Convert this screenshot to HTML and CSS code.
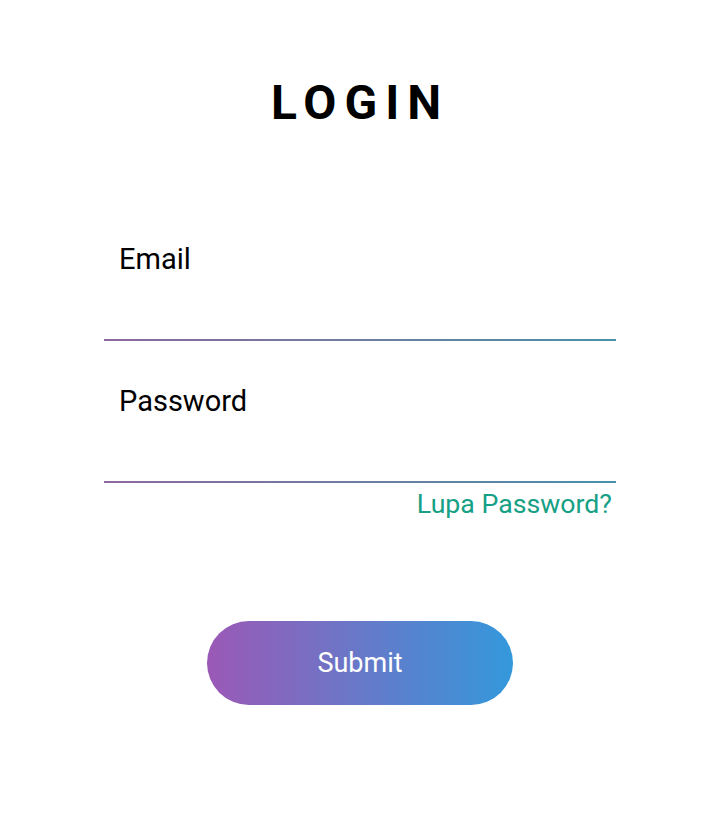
FILE: index.html
```html
<!DOCTYPE html>
<html lang="id">
<head>
<meta charset="utf-8">
<title>Login</title>
<link rel="stylesheet" href="styles.css">
</head>
<body>
<main class="page">
  <h1 class="title">LOGIN</h1>
  <form class="form">
    <div class="field">
      <label class="label" for="email">Email</label>
      <input class="input" id="email" type="email">
      <div class="line"></div>
    </div>
    <div class="field field-second">
      <label class="label" for="password">Password</label>
      <input class="input" id="password" type="password">
      <div class="line"></div>
    </div>
    <a class="forgot" href="#">Lupa Password?</a>
    <div class="actions">
      <button class="submit" type="button">Submit</button>
    </div>
  </form>
</main>
</body>
</html>
```
FILE: styles.css
```css
html, body {
  margin: 0;
  padding: 0;
  background: #ffffff;
}
body {
  font-family: Roboto, "Liberation Sans", Arial, sans-serif;
  color: #000;
}
.page {
  width: 720px;
  height: 816px;
  box-sizing: border-box;
  padding-top: 75px;
}
.title {
  margin: 0;
  font-size: 48px;
  line-height: 56px;
  font-weight: 700;
  letter-spacing: 8px;
  text-align: center;
  color: #000;
}
.form {
  margin: 112px 104px 0 104px;
  display: flex;
  flex-direction: column;
}
.field {
  display: flex;
  flex-direction: column;
}
.field-second {
  margin-top: 44px;
}
.label {
  font-size: 29px;
  line-height: 32px;
  padding-left: 15px;
  color: #000;
}
.input {
  height: 64px;
  border: none;
  outline: none;
  padding: 0 15px;
  background: transparent;
  font: inherit;
  font-size: 26px;
}
.line {
  height: 2px;
  background: linear-gradient(to right, #8d689f, #6d7d9f, #4890aa);
}
.forgot {
  align-self: flex-end;
  margin-top: 6px;
  margin-right: 4px;
  font-size: 26.7px;
  line-height: 30px;
  color: #16a085;
  text-decoration: none;
}
.actions {
  display: flex;
  justify-content: center;
  margin-top: 102px;
}
.submit {
  width: 306px;
  height: 84px;
  border: none;
  border-radius: 42px;
  background: linear-gradient(to right, #9b59b6, #3498db);
  color: #fff;
  font-family: Roboto, "Liberation Sans", Arial, sans-serif;
  font-size: 27px;
  cursor: pointer;
}
```
